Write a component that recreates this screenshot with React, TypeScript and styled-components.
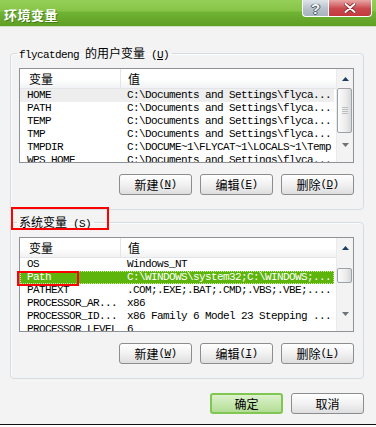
import React from "react";
import styled, { createGlobalStyle } from "styled-components";

type Row = { name: string; value: string; state?: "selected" | "focused" };

const userVars: Row[] = [
  { name: "HOME", value: "C:\\Documents and Settings\\flyca...", state: "selected" },
  { name: "PATH", value: "C:\\Documents and Settings\\flyca..." },
  { name: "TEMP", value: "C:\\Documents and Settings\\flyca..." },
  { name: "TMP", value: "C:\\Documents and Settings\\flyca..." },
  { name: "TMPDIR", value: "C:\\DOCUME~1\\FLYCAT~1\\LOCALS~1\\Temp" },
  { name: "WPS_HOME", value: "C:\\Documents and Settings\\flyca..." },
];

const systemVars: Row[] = [
  { name: "OS", value: "Windows_NT" },
  { name: "Path", value: "C:\\WINDOWS\\system32;C:\\WINDOWS;...", state: "focused" },
  { name: "PATHEXT", value: ".COM;.EXE;.BAT;.CMD;.VBS;.VBE;...." },
  { name: "PROCESSOR_AR...", value: "x86" },
  { name: "PROCESSOR_ID...", value: "x86 Family 6 Model 23 Stepping ..." },
  { name: "PROCESSOR_LEVEL", value: "6" },
];

/* ─── COMPONENT ───────────────────────────────────────────────────── */

function Key({ k }: { k: string }) {
  return (
    <Mono>
      {" ("}
      <u>{k}</u>
      {")"}
    </Mono>
  );
}

function VarList({
  rows,
  thumbTop,
  thumbHeight,
  children,
}: {
  rows: Row[];
  thumbTop: number;
  thumbHeight: number;
  children?: React.ReactNode;
}) {
  return (
    <ListBox>
      <ListClip>
        <ListContent>
          <HeaderRow>
            <HeaderCell>变量</HeaderCell>
            <HeaderCell>值</HeaderCell>
          </HeaderRow>
          {rows.map((r) => (
            <DataRow key={r.name} $state={r.state}>
              <Cell>{r.name}</Cell>
              <Cell>{r.value}</Cell>
            </DataRow>
          ))}
        </ListContent>
        <ScrollBar>
          <ArrowUp>
            <svg width="7" height="4" viewBox="0 0 7 4">
              <path d="M3.5 0 L7 4 L0 4 Z" fill="#1d3d5e" />
            </svg>
          </ArrowUp>
          <Track>
            <Thumb style={{ top: thumbTop, height: thumbHeight }}>
              {thumbHeight > 30 && (
                <Grip>
                  <i />
                  <i />
                  <i />
                  <i />
                </Grip>
              )}
            </Thumb>
          </Track>
          <ArrowDown>
            <svg width="7" height="4" viewBox="0 0 7 4">
              <path d="M0 0 L7 0 L3.5 4 Z" fill="#6d7479" />
            </svg>
          </ArrowDown>
        </ScrollBar>
      </ListClip>
      {children}
    </ListBox>
  );
}

export default function App() {
  return (
    <>
      <GlobalStyle />
      <Window>
        <TitleBar>
          <Title>环境变量</Title>
          <CaptionButtons>
            <HelpButton>?</HelpButton>
            <CloseButton>
              <svg width="12" height="10" viewBox="0 0 12 10">
                <path
                  d="M1.5 1 L10.5 9 M10.5 1 L1.5 9"
                  stroke="#8a2124"
                  strokeWidth="3.6"
                  strokeLinecap="round"
                />
                <path
                  d="M1.5 1 L10.5 9 M10.5 1 L1.5 9"
                  stroke="#ffffff"
                  strokeWidth="2"
                  strokeLinecap="round"
                />
              </svg>
            </CloseButton>
          </CaptionButtons>
        </TitleBar>
        <Body>
          <Group>
            <Legend>
              <Mono>flycatdeng </Mono>的用户变量
              <Key k="U" />
            </Legend>
            <VarList rows={userVars} thumbTop={0} thumbHeight={45} />
            <ButtonRow>
              <Button>
                新建<Key k="N" />
              </Button>
              <Button>
                编辑<Key k="E" />
              </Button>
              <Button>
                删除<Key k="D" />
              </Button>
            </ButtonRow>
          </Group>
          <Group $gap>
            <Legend>
              系统变量
              <Key k="S" />
              <LegendMark />
            </Legend>
            <VarList rows={systemVars} thumbTop={11} thumbHeight={15}>
              <RowMark />
            </VarList>
            <ButtonRow>
              <Button>
                新建<Key k="W" />
              </Button>
              <Button>
                编辑<Key k="I" />
              </Button>
              <Button>
                删除<Key k="L" />
              </Button>
            </ButtonRow>
          </Group>
          <Footer>
            <Button $primary>确定</Button>
            <Button>取消</Button>
          </Footer>
        </Body>
      </Window>
    </>
  );
}

/* ─── STYLED COMPONENTS ───────────────────────────────────────────── */

const GlobalStyle = createGlobalStyle`
  html, body {
    margin: 0;
    padding: 0;
    background: #ffffff;
  }
  body {
    font-family: "Noto Sans CJK SC", "Liberation Sans", sans-serif;
    font-size: 12px;
    color: #000;
  }
  * { box-sizing: border-box; }
`;

const Window = styled.div`
  width: 376px;
  height: 425px;
  display: flex;
  flex-direction: column;
  background: #f3f3f3;
  border-bottom: 1px solid #111;
`;

const TitleBar = styled.div`
  height: 27px;
  display: flex;
  justify-content: space-between;
  align-items: flex-start;
  background: linear-gradient(
    #95cf58 0,
    #86c447 11px,
    #71b333 12px,
    #5e9e25 26px,
    #cfe3c0 26px
  );
`;

const Title = styled.div`
  align-self: center;
  padding: 2px 0 0 4px;
  color: #fff;
  font-weight: bold;
  font-size: 13px;
  line-height: 16px;
  letter-spacing: 0.5px;
  text-shadow: 1px 1px 0 rgba(40, 80, 10, 0.5);
`;

const CaptionButtons = styled.div`
  display: flex;
  margin-right: 4px;
`;

const captionBase = `
  height: 17px;
  display: flex;
  align-items: center;
  justify-content: center;
  border: 1px solid #ffffff;
  border-top: none;
  color: #fff;
  font-family: "Liberation Sans", sans-serif;
  font-weight: bold;
`;

const HelpButton = styled.div`
  ${captionBase}
  width: 26px;
  border-right: none;
  border-radius: 0 0 0 4px;
  background: linear-gradient(#dfe5ea, #b6c1ca 55%, #a7b3bd);
  font-size: 15px;
  line-height: 15px;
  color: #f4f6f8;
  text-shadow: 0 0 1px #44525e, 1px 0 0 #55606a, -1px 0 0 #55606a, 0 1px 0 #55606a;
`;

const CloseButton = styled.div`
  ${captionBase}
  width: 44px;
  border-radius: 0 0 4px 0;
  background: linear-gradient(#e9a7a7, #c9484c 55%, #c43a3e);
`;

const Body = styled.div`
  flex: 1;
  display: flex;
  flex-direction: column;
  padding: 19px 12px 0 10px;
`;

const Group = styled.fieldset<{ $gap?: boolean }>`
  margin: ${(p) => (p.$gap ? "5px" : "0")} 0 0 0;
  padding: 8px 8px 14px 8px;
  border: 1px solid #d3dce3;
  border-radius: 4px;
  box-shadow: inset 1px 1px 0 #fbfcfd;
`;

const Legend = styled.legend`
  position: relative;
  margin-left: -2px;
  padding: 0 3px 0 2px;
  height: 14px;
  line-height: 14px;
  white-space: nowrap;
`;

const Mono = styled.span`
  font-family: "Liberation Mono", monospace;
  font-size: 11px;
  letter-spacing: -0.6px;
`;

const LegendMark = styled.span`
  position: absolute;
  left: -6px;
  top: -8px;
  width: 98px;
  height: 23px;
  border: 2px solid #f00;
`;

const RowMark = styled.span`
  position: absolute;
  left: -3px;
  top: 33px;
  width: 62px;
  height: 15px;
  border: 2px solid #f00;
`;

const ListBox = styled.div`
  position: relative;
  height: 95px;
  margin-right: 1px;
  border: 1px solid #8e9297;
  background: #fff;
`;

const ListClip = styled.div`
  height: 100%;
  display: flex;
  overflow: hidden;
`;

const ListContent = styled.div`
  flex: 1;
  min-width: 0;
  font-family: "Liberation Mono", monospace;
  font-size: 11px;
  letter-spacing: -0.6px;
`;

const HeaderRow = styled.div`
  height: 20px;
  display: grid;
  grid-template-columns: 101px 1fr;
  background: linear-gradient(#ffffff 0, #ffffff 55%, #f1f2f3 100%);
  border-bottom: 1px solid #e3e5e7;
  font-family: "Noto Sans CJK SC", sans-serif;
  font-size: 12px;
  letter-spacing: 0;
`;

const HeaderCell = styled.div`
  line-height: 19px;
  padding-left: 9px;
  &:first-child {
    border-right: 1px solid #e2e4e6;
  }
  &:last-child {
    padding-left: 7px;
  }
`;

const DataRow = styled.div<{ $state?: "selected" | "focused" }>`
  height: 13px;
  display: grid;
  grid-template-columns: 101px 1fr;
  margin-right: 2px;
  white-space: nowrap;
  background: ${(p) =>
    p.$state === "focused" ? "#5db40b" : p.$state === "selected" ? "#eeeeee" : "transparent"};
  color: ${(p) => (p.$state === "focused" ? "#fff" : "#000")};
  outline: ${(p) => (p.$state === "focused" ? "1px dotted #c9e9a6" : "none")};
  outline-offset: -1px;
`;

const Cell = styled.div`
  line-height: 13px;
  padding-left: 7px;
  overflow: hidden;
  &:last-child {
    padding-left: 6px;
  }
`;

const ScrollBar = styled.div`
  width: 17px;
  display: flex;
  flex-direction: column;
  background: #f3f3f3;
  border-left: 1px solid #eaeaea;
`;

const ArrowUp = styled.div`
  height: 19px;
  display: flex;
  justify-content: center;
  align-items: center;
`;

const ArrowDown = styled.div`
  height: 26px;
  display: flex;
  justify-content: center;
  align-items: flex-start;
  padding-top: 7px;
`;

const Track = styled.div`
  position: relative;
  flex: 1;
`;

const Thumb = styled.div`
  position: absolute;
  left: 0;
  right: 1px;
  border: 1px solid #9da2a6;
  border-radius: 2px;
  background: linear-gradient(90deg, #fbfbfb, #ececec 60%, #d5d7d9);
  display: flex;
  align-items: center;
  justify-content: center;
`;

const Grip = styled.div`
  display: flex;
  flex-direction: column;
  gap: 1px;
  i {
    display: block;
    width: 6px;
    height: 1px;
    background: #b9bdc0;
  }
`;

const ButtonRow = styled.div`
  display: flex;
  justify-content: flex-end;
  gap: 8px;
  margin-top: 11px;
  padding-right: 1px;
`;

const Button = styled.div<{ $primary?: boolean }>`
  width: 73px;
  height: 21px;
  display: flex;
  align-items: center;
  justify-content: center;
  white-space: nowrap;
  line-height: 19px;
  border-radius: 3px;
  border: ${(p) => (p.$primary ? "2px solid #80c653" : "1px solid #8b8d8f")};
  background: ${(p) =>
    p.$primary
      ? "linear-gradient(#dcf1cd, #c7e8b0 50%, #b3dc96)"
      : "linear-gradient(#ffffff, #f1f1f1 50%, #dedede)"};
`;

const Footer = styled.div`
  display: flex;
  justify-content: flex-end;
  gap: 8px;
  margin-top: 14px;
`;
